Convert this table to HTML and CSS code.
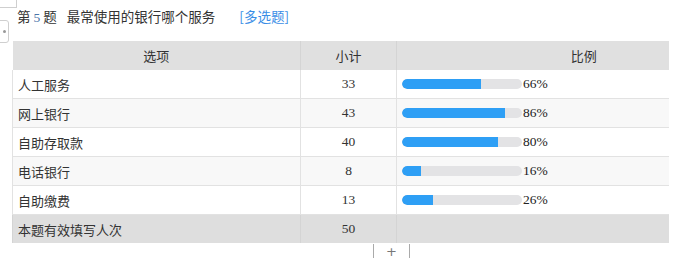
FILE: index.html
```html
<!DOCTYPE html>
<html lang="zh">
<head>
<meta charset="utf-8">
<link rel="stylesheet" href="styles.css">
</head>
<body>
<div class="page">
  <div class="corner"></div>
  <div class="handle"><span class="dot"></span></div>
  <div class="title">
    <span class="q">第 <span class="num">5</span> 题<span class="sp"></span>最常使用的银行哪个服务</span>
    <span class="type">[多选题]</span>
  </div>
  <table class="stats">
    <colgroup><col class="c1"><col class="c2"><col class="c3"></colgroup>
    <thead>
      <tr><th>选项</th><th>小计</th><th class="ratio-h">比例</th></tr>
    </thead>
    <tbody>
      <tr><td class="opt">人工服务</td><td class="cnt">33</td><td><div class="bar-cell"><div class="track"><div class="fill" style="width:66%"></div></div><span class="pct">66%</span></div></td></tr>
      <tr class="alt"><td class="opt">网上银行</td><td class="cnt">43</td><td><div class="bar-cell"><div class="track"><div class="fill" style="width:86%"></div></div><span class="pct">86%</span></div></td></tr>
      <tr><td class="opt">自助存取款</td><td class="cnt">40</td><td><div class="bar-cell"><div class="track"><div class="fill" style="width:80%"></div></div><span class="pct">80%</span></div></td></tr>
      <tr class="alt"><td class="opt">电话银行</td><td class="cnt">8</td><td><div class="bar-cell"><div class="track"><div class="fill" style="width:16%"></div></div><span class="pct">16%</span></div></td></tr>
      <tr><td class="opt">自助缴费</td><td class="cnt">13</td><td><div class="bar-cell"><div class="track"><div class="fill" style="width:26%"></div></div><span class="pct">26%</span></div></td></tr>
      <tr class="total"><td class="opt">本题有效填写人次</td><td class="cnt">50</td><td></td></tr>
    </tbody>
  </table>
  <div class="more"><span class="plus">+</span></div>
</div>
</body>
</html>
```

FILE: styles.css
```css
html, body {
  margin: 0;
  padding: 0;
  background: #fff;
}
.page {
  position: relative;
  width: 688px;
  height: 258px;
  overflow: hidden;
  font-family: "Noto Sans CJK SC", "Noto Sans", sans-serif;
  color: #333;
}
.corner {
  position: absolute;
  left: 0;
  top: 0;
  width: 16px;
  height: 7px;
  border-right: 1px solid #cfcfcf;
  border-bottom: 1px solid #cfcfcf;
}
.handle {
  position: absolute;
  left: -4px;
  top: 20px;
  width: 11px;
  height: 21px;
  border: 1px solid #cfcfcf;
  border-radius: 3px;
  background: #fff;
}
.handle .dot {
  position: absolute;
  left: 6px;
  top: 9px;
  width: 3px;
  height: 3px;
  border-radius: 50%;
  background: #999;
}
.title {
  display: flex;
  gap: 24px;
  padding: 6px 0 0 17px;
  height: 41px;
  box-sizing: border-box;
  font-size: 13.5px;
  line-height: 20px;
  color: #333;
}
.title .sp {
  display: inline-block;
  width: 10px;
}
.title .num {
  font-family: "Liberation Serif", serif;
  color: #4a74a8;
}
.title .type {
  color: #3a8ee6;
}
.stats {
  margin-left: 12px;
  width: 656px;
  border-collapse: collapse;
  table-layout: fixed;
  font-size: 13px;
}
.c1 { width: 288px; }
.c2 { width: 96px; }
.c3 { width: 272px; }
.stats th {
  background: #e0e0e0;
  font-weight: normal;
  height: 29px;
  padding: 0;
  text-align: center;
  border-left: 1px solid #d4d4d4;
  color: #333;
}
.stats th:first-child { border-left: none; }
.stats th.ratio-h { padding-left: 102px; }
.stats td {
  height: 28px;
  padding: 0;
  border-bottom: 1px solid #e2e2e2;
  border-left: 1px solid #e2e2e2;
}
.stats tr.alt td { background: #f8f8f8; }
.stats tr.total td {
  background: #dedede;
  border-bottom: none;
  border-left-color: #d4d4d4;
}
.stats td.opt {
  padding-left: 5px;
  color: #333;
}
.stats td.cnt {
  text-align: center;
  font-family: "Liberation Serif", serif;
  font-size: 13.5px;
}
.bar-cell {
  display: flex;
  align-items: center;
  padding-left: 5px;
}
.track {
  width: 120px;
  height: 10px;
  border-radius: 5px;
  background: #e3e3e5;
  overflow: hidden;
}
.fill {
  height: 100%;
  background: #2e9ff5;
  border-radius: 5px 0 0 5px;
}
.pct {
  margin-left: 1px;
  font-family: "Liberation Serif", serif;
  font-size: 13.5px;
  color: #222;
}
.more {
  margin: 1px 0 0 373px;
  width: 35px;
  height: 15px;
  border-left: 1px solid #aaa;
  border-right: 1px solid #aaa;
  display: flex;
  justify-content: center;
  align-items: center;
}
.plus {
  font-family: "DejaVu Sans", sans-serif;
  font-size: 13px;
  line-height: 13px;
  color: #777;
}
```
